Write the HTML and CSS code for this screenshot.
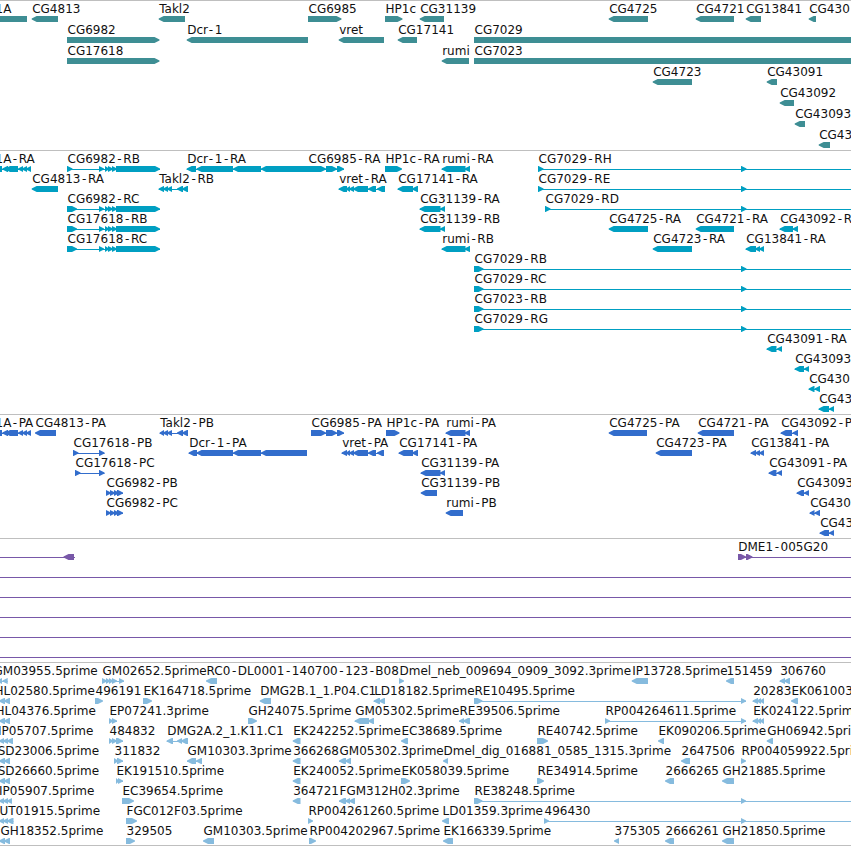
FILE: index.html
```html
<!DOCTYPE html>
<html lang="en">
<head>
<meta charset="utf-8">
<title>Genome tracks</title>
<link rel="stylesheet" href="styles.css">
</head>
<body>
<main class="browser" id="browser"></main>
<script src="tracks.js"></script>
</body>
</html>
```
FILE: styles.css
```css
body {
  margin: 0;
  background: #fff;
}

.browser {
  display: flex;
  flex-direction: column;
  width: 851px;
  height: 846px;
  overflow: hidden;
  box-sizing: border-box;
  border-bottom: 1px solid #bfbfbf;
}

.track {
  flex: none;
  border-top: 1px solid #bfbfbf;
}

.track svg {
  display: block;
  width: 100%;
}

.label {
  font: 12px "DejaVu Sans", sans-serif;
  fill: #111;
}

.gene { color: #3e8e94; }
.transcript { color: #009fc2; }
.protein { color: #326dcc; }
.clone { color: #7858a8; }
.est { color: #86bbde; }

.exon,
.intron {
  fill: currentColor;
}
```
FILE: tracks.js
```js
// Feature: row | label x | label | strand (L, R or N) | exons | optional line end
const introns = "99-104,105-109,108-113,112-117,116-160";
const tracks = [
  { name: "gene", pitch: 21, height: 150, features: `
0|-5|1A|N|-9-27
0|31.7|CG4813|L|31.7-58
0|158.7|Takl2|L|158.7-185
1|67|CG6982|R|67-159.5
2|67|CG17618|R|67-159.5
1|186.7|Dcr-1|L|186.7-308
0|308|CG6985|R|308-341.5
1|338.7|vret|L|338.7-384
0|385|HP1c|R|385-402.5
0|419.7|CG31139|L|419.7-444
1|397.7|CG17141|L|397.7-417
2|441.7|rumi|L|441.7-469
1|474|CG7029|N|474-860
2|474|CG7023|N|474-860
0|608.7|CG4725|L|608.7-648
0|695.7|CG4721|L|695.7-734
0|745.7|CG13841|L|745.7-761
0|808.7|CG430|L|808.7-816
3|652.7|CG4723|L|652.7-692
3|766.7|CG43091|L|766.7-777
4|779.7|CG43092|L|779.7-794
5|794.7|CG43093|L|794.7-805
6|818.7|CG43|L|818.7-830` },
  { name: "transcript", pitch: 20, height: 264, features: `
0|-5|1A-RA|L|-6-2,2.3-8,5-18,18-23,22-27,26-31
1|31.7|CG4813-RA|L|31.7-58
0|67|CG6982-RB|R|67-72.5,${introns}
2|67|CG6982-RC|R|67-77,${introns}
3|67|CG17618-RB|R|67-77,${introns}
4|67|CG17618-RC|R|67-77,${introns}
1|158.7|Takl2-RB|L|158.7-164,163-168,167-172,177-183,182-188
0|186.7|Dcr-1-RA|L|186.7-196,196.5-233,233-261,261-308
0|308|CG6985-RA|R|308-326,326-337,337-344
0|385|HP1c-RA|R|385-402
0|441.7|rumi-RA|L|441.7-465.5,464.5-470
1|338.7|vret-RA|L|338.7-347,346-350,349-354,353-368,368-376,377-385
1|397.7|CG17141-RA|L|397.7-413,412-418
2|419.7|CG31139-RA|L|419.7-440.5,440-445
3|419.7|CG31139-RB|L|419.7-440.5,440-445
4|441.7|rumi-RB|L|441.7-465.5,464.5-470
0|538|CG7029-RH|R|538-543.5,741-746.5|860
1|538|CG7029-RE|R|538-543.5,741-746.5|860
2|545|CG7029-RD|R|545-550.5,741-746.5|860
5|474|CG7029-RB|R|474-483.5,741-746.5|860
6|474|CG7029-RC|R|474-483.5,741-746.5|860
7|474|CG7023-RB|R|474-483.5,741-746.5|860
8|474|CG7029-RG|R|474-483.5,741-746.5|860
3|608.7|CG4725-RA|L|608.7-648
3|695.7|CG4721-RA|L|695.7-734
3|779.7|CG43092-R|L|779.7-793,792.5-798
4|652.7|CG4723-RA|L|652.7-692
4|745.7|CG13841-RA|L|745.7-756,755-760,759-764
9|766.7|CG43091-RA|L|766.7-776.5,777-782
10|794.7|CG43093|L|794.7-804,804-809
11|808.7|CG430|L|808.7-814.5,814.5-820
12|818.7|CG43|L|818.7-829,829-834` },
  { name: "protein", pitch: 20, height: 124, features: `
0|-5|1A-PA|L|-6-2,2.3-8,5-18,18-23,22-27,26-31
0|35|CG4813-PA|L|35-56
0|159.7|Takl2-PB|L|159.7-164,163-168,167-172,177-183,182-188
0|311|CG6985-PA|R|311-326,326-337,337-344
0|386|HP1c-PA|R|386-399.5
0|445.7|rumi-PA|L|445.7-465.5,464.5-470
0|608.7|CG4725-PA|L|608.7-647
0|697.7|CG4721-PA|L|697.7-734
0|780.7|CG43092-P|L|780.7-792,792.5-798
1|73|CG17618-PB|R|73-78.5,99-104.5
1|188.7|Dcr-1-PA|L|188.7-197,196.5-233,233-261,261-307
1|341.7|vret-PA|L|341.7-347,346-350,349-354,353-368,368-376,377-384
1|398.7|CG17141-PA|L|398.7-413,412-418
1|655.7|CG4723-PA|L|655.7-692
1|750.7|CG13841-PA|L|750.7-756,755-760,759-764
2|75|CG17618-PC|R|75-80.5,99-104.5
2|420.7|CG31139-PA|L|420.7-440.5,440-445
2|768.7|CG43091-PA|L|768.7-776.5,777-782
3|106|CG6982-PB|R|106-111,110-115,114-119,117-123
3|420.7|CG31139-PB|L|420.7-437
3|796.7|CG43093|L|796.7-804,804-809
4|106|CG6982-PC|R|106-111,110-115,114-119,117-123
4|445.7|rumi-PB|L|445.7-463
4|809.7|CG430|L|809.7-814.5,814.5-820
5|819.7|CG43|L|819.7-829,829-834` },
  { name: "clone", pitch: 20, height: 124, features: `
0|0||L|-30--20,63.5-74|75
0|737.7|DME1-005G20|R|738-746,746-752.5|860
1|0||N|-9--5|860
2|0||N|-9--5|860
3|0||N|-9--5|860
4|0||N|-9--5|860
5|0||N|-9--5|860` },
  { name: "est", pitch: 20, height: 183, features: `
0|-7|GM03955.5prime|L|-3-2,2.5-7.7
0|102|GM02652.5prime|R|102-107,106-110,109-113,112-117,119-124
0|206|RC0-DL0001-140700-123-B08|L|206-217
0|399|Dmel_neb_009694_0909_3092.3prime|R|399-404
0|631.7|IP13728.5prime|L|631.7-648
0|726|151459|L|726-734
0|779.7|306760|L|779.7-785,784-790
1|-6|HL02580.5prime|L|-1-5,4-10
1|95|496191|R|95-103
1|143|EK164718.5prime|R|143-152
1|259.7|DMG2B.1_1.P04.C1|L|259.7-271
1|373.7|LD18182.5prime|L|373.7-380,379-385
1|474|RE10495.5prime|R|474-482.5,741-746
1|752.7|20283|L|752.7-758,757-761,760-764
1|791|EK061003|L|791-798
2|-5|HL04376.5prime|L|-1-5,4-10
2|109|EP07241.3prime|R|109-113,112-117
2|248|GH24075.5prime|R|248-257
2|354.7|GM05302.5prime|L|354.7-369,368-374
2|459|RE39506.5prime|L|459-464,463-470
2|605|RP004264611.5prime|R|605-610,741-746
2|752.7|EK024122.5prime|L|752.7-758,757-761,760-764
3|-2.5|IP05707.5prime|L|-1-4,3-8,7-13
3|109|484832|R|109-113,112-117,116-123
3|166.7|DMG2A.2_1.K11.C1|L|166.7-173,177-182,181-188
3|292.7|EK242252.5prime|L|292.7-300.5
3|401|EC38689.5prime|L|401-408
3|537|RE40742.5prime|R|537-548
3|658|EK090206.5prime|L|658-664
3|766.7|GH06942.5prime|L|766.7-773
4|-2.8|SD23006.5prime|L|-1-5,4-10
4|114|311832|R|114-118,117-123
4|187|GM10303.3prime|L|187-196,196-202
4|292.7|366268|L|292.7-300.5
4|339|GM05302.3prime|L|339-346,345-351
4|443|Dmel_dig_016881_0585_1315.3prime|L|443-448
4|681|2647506|L|681-690
4|741|RP004059922.5prime|R|741-746
5|-2.8|SD26660.5prime|L|-1-5,4-10
5|116|EK191510.5prime|R|116-119,118-123
5|292.7|EK240052.5prime|L|292.7-300.5
5|401|EK058039.5prime|R|401-410
5|537|RE34914.5prime|R|537-544
5|665|2666265|L|665-674
5|722|GH21885.5prime|L|722-734
6|-1.5|IP05907.5prime|L|-1-4,3-8,7-12
6|122|EC39654.5prime|R|122-134
6|292.7|364721|L|292.7-300.5
6|339|FGM312H02.3prime|L|339-346,345-350,349-355
6|474|RE38248.5prime|R|474-482.5,741-746|860
7|-1|UT01915.5prime|L|-1-4,3-8,7-13.5
7|126|FGC012F03.5prime|R|126-137
7|308|RP004261260.5prime|R|308-313
7|442|LD01359.3prime|L|442-449
7|544|496430|R|544-549,741-746|860
8|0|GH18352.5prime|L|-1-5,4-10
8|126|329505|R|126-135
8|203|GM10303.5prime|L|203-214
8|309|RP004202967.5prime|R|309-316
8|443|EK166339.5prime|L|443-453
8|614|375305|L|614-619
8|665|2666261|L|665-674
8|722|GH21850.5prime|L|722-734` }
];

const NS = "http://www.w3.org/2000/svg";

function add(parent, tag, attrs, text) {
  const el = document.createElementNS(NS, tag);
  for (const key in attrs) el.setAttribute(key, attrs[key]);
  if (text) el.textContent = text;
  parent.appendChild(el);
  return el;
}

// An exon is a bar whose leading end tapers to a blunt tip on its strand.
function exonPoints(a, b, y, strand) {
  const h = Math.min(5, b - a);
  if (strand === "L") return `${a},${y + 2.4} ${a + h},${y} ${b},${y} ${b},${y + 6} ${a + h},${y + 6} ${a},${y + 3.6}`;
  if (strand === "R") return `${a},${y} ${b - h},${y} ${b},${y + 2.4} ${b},${y + 3.6} ${b - h},${y + 6} ${a},${y + 6}`;
  return `${a},${y} ${b},${y} ${b},${y + 6} ${a},${y + 6}`;
}

// Hyphens get a digit-wide cell.
function hyphenShifts(label) {
  return [...label].map((c, i) => (c === "-" ? 1.6 : 0) + (label[i - 1] === "-" ? 1.6 : 0)).join(" ");
}

for (const track of tracks) {
  const section = document.createElement("section");
  section.className = "track " + track.name;
  const svg = add(section, "svg", { height: track.height - 1, viewBox: `0 0 851 ${track.height - 1}` });
  for (const line of track.features.trim().split("\n")) {
    const [row, x, label, strand, exonList, end] = line.split("|");
    const top = row * track.pitch + 15;
    const exons = exonList.split(",").map(s => s.match(/^(-?[\d.]+)-(-?[\d.]+)$/).slice(1).map(Number));
    const from = exons[0][0];
    const to = end ? Number(end) : exons[exons.length - 1][1];
    if (exons.length > 1 || end) {
      add(svg, "rect", { class: "intron", x: from, y: top + 3, width: to - from, height: 1 });
    }
    for (const [a, b] of exons) {
      add(svg, "polygon", { class: "exon", points: exonPoints(a, b, top, strand) });
    }
    if (label) {
      const attrs = { class: "label", x: Number(x) + 0.5, y: top - 3 };
      if (label.includes("-")) attrs.dx = hyphenShifts(label);
      add(svg, "text", attrs, label);
    }
  }
  document.getElementById("browser").appendChild(section);
}
```
